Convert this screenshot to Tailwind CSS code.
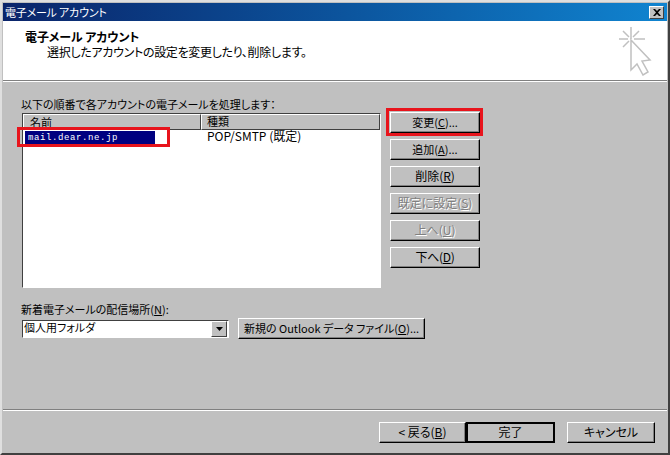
<!DOCTYPE html>
<html lang="ja">
<head>
  <meta charset="UTF-8">
  <title>電子メール アカウント</title>
  <script src="https://cdn.jsdelivr.net/npm/@tailwindcss/browser@4"></script>
</head>
<body class="bg-[#c0c0c0] text-black text-[12px] leading-[14px] font-['Noto_Sans_CJK_JP',sans-serif] [font-feature-settings:'palt']">
<div class="relative w-[670px] h-[455px] overflow-hidden flex flex-col bg-[#c0c0c0] border-t-2 border-l-2 border-t-[#dfdfdf] border-l-[#dfdfdf] border-r-2 border-b-2 border-r-[#404040] border-b-[#404040] p-px">

  <!-- title bar -->
  <div class="h-[18px] shrink-0 flex items-center justify-between pl-[2px] pr-[3px] bg-gradient-to-r from-[#0a246a] to-[#1084d0] text-white">
    <span class="text-[11px] leading-[18px] tracking-[-0.2px]">電子メール アカウント</span>
    <span class="w-[15px] h-[13px] flex items-center justify-center bg-[#c0c0c0] border border-t-white border-l-white border-r-[#404040] border-b-[#404040]">
      <svg width="8" height="7" viewBox="0 0 8 7"><path d="M0 0h2l2 2 2-2h2L5 3.5 8 7H6L4 5 2 7H0l3-3.5z" fill="#000"/></svg>
    </span>
  </div>

  <!-- header -->
  <div class="h-[60px] shrink-0 bg-white border-b border-[#808080] flex justify-between pl-[22px] pr-[13px] pt-[8px]">
    <div>
      <div class="font-bold leading-[15px] tracking-[-0.1px]">電子メール アカウント</div>
      <div class="pl-[22px] leading-[15px] tracking-[-0.3px]">選択したアカウントの設定を変更したり、削除します。</div>
    </div>
    <svg width="36" height="50" viewBox="0 0 36 50" class="-mt-[3px]" fill="none" stroke="#c0c0c0" stroke-width="1.5">
      <path d="M13 1v12M1 13h9M16 13h11M5 5l6 6M21 5l-6 6M5 21l6-6"/>
      <path d="M13 14l19 20-8 1 6 11-5 3-6-11-6 6z" fill="#fff"/>
    </svg>
  </div>
  <div class="h-px shrink-0 bg-white"></div>

  <!-- body -->
  <div class="flex-1 pl-[18px] pr-[16px] pt-[16px] flex flex-col">
    <div class="flex gap-[9px]">
      <div class="w-[360px]">
        <div class="h-[15px] text-[11px] leading-[12px]">以下の順番で各アカウントの電子メールを処理します：</div>
        <div class="ml-px w-[359px] h-[175px] bg-white border border-t-[#404040] border-l-[#404040] border-r-white border-b-white">
          <div class="flex h-[16px]">
            <div class="w-[178px] pl-[6px] text-[11px] leading-[14px] bg-[#c0c0c0] border border-t-white border-l-white border-r-[#404040] border-b-[#404040]">名前</div>
            <div class="flex-1 pl-[5px] text-[11px] leading-[13px] bg-[#c0c0c0] border border-t-white border-l-white border-r-[#404040] border-b-[#404040]">種類</div>
          </div>
          <div class="flex h-[14px]">
            <div class="w-[178px] pl-[2px]">
              <div class="w-[130px] h-[13px] mt-px pl-[3px] bg-[#000080] text-white font-['Liberation_Mono',monospace] text-[9px] leading-[15px] tracking-[0.6px]">mail.dear.ne.jp</div>
            </div>
            <div class="pl-[6px] h-[11px] leading-[11px]">POP/SMTP (既定)</div>
          </div>
        </div>
      </div>

      <div class="w-[90px] pt-[14px] flex flex-col gap-[6px]">
        <button class="w-[90px] h-[21px] pb-[2px] text-[11px] bg-[#c0c0c0] border border-t-white border-l-white border-r-black border-b-black shadow-[inset_-1px_-1px_0_#808080]">変更(<u>C</u>)...</button>
        <button class="w-[90px] h-[21px] pb-[2px] text-[11px] bg-[#c0c0c0] border border-t-white border-l-white border-r-black border-b-black shadow-[inset_-1px_-1px_0_#808080]">追加(<u>A</u>)...</button>
        <button class="w-[90px] h-[21px] pb-[2px] bg-[#c0c0c0] border border-t-white border-l-white border-r-black border-b-black shadow-[inset_-1px_-1px_0_#808080]">削除(<u>R</u>)</button>
        <button class="w-[90px] h-[21px] pb-[2px] bg-[#c0c0c0] text-[#808080] [text-shadow:1px_1px_0_#fff] border border-t-white border-l-white border-r-black border-b-black shadow-[inset_-1px_-1px_0_#808080]">既定に設定(<u>S</u>)</button>
        <button class="w-[90px] h-[21px] pb-[2px] bg-[#c0c0c0] text-[#808080] [text-shadow:1px_1px_0_#fff] border border-t-white border-l-white border-r-black border-b-black shadow-[inset_-1px_-1px_0_#808080]">上へ(<u>U</u>)</button>
        <button class="w-[90px] h-[21px] pb-[2px] tracking-[-0.3px] bg-[#c0c0c0] border border-t-white border-l-white border-r-black border-b-black shadow-[inset_-1px_-1px_0_#808080]">下へ(<u>D</u>)</button>
      </div>
    </div>

    <div class="mt-[14px] h-[14px] text-[11px] leading-[14px]">新着電子メールの配信場所(<u>N</u>):</div>
    <div class="flex items-center gap-[9px] mt-[2px]">
      <div class="ml-px w-[207px] h-[18px] bg-white border border-t-[#404040] border-l-[#404040] border-r-white border-b-white flex justify-between">
        <span class="pl-px text-[11px] leading-[13px]">個人用フォルダ</span>
        <span class="w-[16px] h-[16px] mr-px flex items-center justify-center bg-[#c0c0c0] border border-t-white border-l-white border-r-[#404040] border-b-[#404040]">
          <svg width="7" height="4" viewBox="0 0 7 4"><path d="M0 0h7L3.5 4z" fill="#000"/></svg>
        </span>
      </div>
      <button class="w-[187px] h-[21px] pb-[2px] text-[11px] whitespace-nowrap bg-[#c0c0c0] border border-t-white border-l-white border-r-black border-b-black shadow-[inset_-1px_-1px_0_#808080]">新規の Outlook データ ファイル(<u>O</u>)...</button>
    </div>
  </div>

  <!-- footer -->
  <div class="shrink-0 h-[42px] border-t border-t-white flex justify-end pr-[12px] pt-[11px] shadow-[0_-1px_0_#808080]">
    <button class="w-[87px] h-[21px] pb-[2px] bg-[#c0c0c0] border border-t-white border-l-white border-r-black border-b-black shadow-[inset_-1px_-1px_0_#808080]">&lt; 戻る(<u>B</u>)</button>
    <button class="w-[89px] h-[21px] pb-px bg-[#c0c0c0] border-2 border-black">完了</button>
    <button class="ml-[12px] w-[88px] h-[21px] pb-[2px] bg-[#c0c0c0] border border-t-white border-l-white border-r-black border-b-black shadow-[inset_-1px_-1px_0_#808080]">キャンセル</button>
  </div>

  <!-- red annotation boxes -->
  <div class="absolute left-[15px] top-[125px] w-[153px] h-[20px] border-[3px] border-[#e8141c]"></div>
  <div class="absolute left-[384px] top-[106px] w-[97px] h-[28px] border-[3px] border-[#e8141c]"></div>
</div>
</body>
</html>
